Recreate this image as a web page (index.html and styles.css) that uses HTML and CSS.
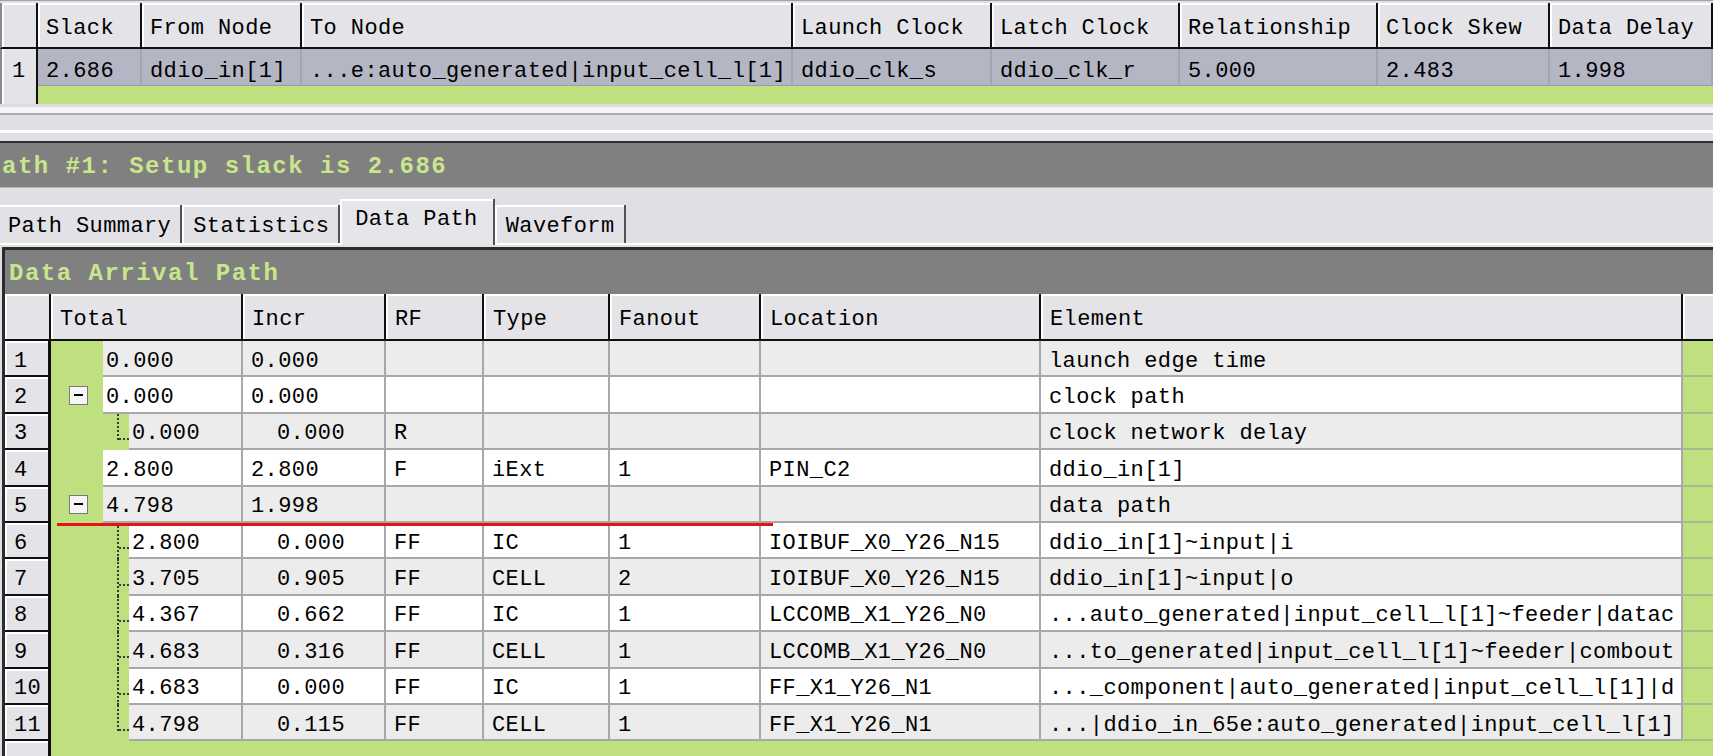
FILE: index.html
```html
<!DOCTYPE html>
<html>
<head>
<meta charset="utf-8">
<link rel="stylesheet" href="styles.css">
</head>
<body>
<div class="top">
  <div class="tgrid">
    <div class="th corner"></div>
    <div class="th">Slack</div>
    <div class="th">From Node</div>
    <div class="th">To Node</div>
    <div class="th">Launch Clock</div>
    <div class="th">Latch Clock</div>
    <div class="th">Relationship</div>
    <div class="th">Clock Skew</div>
    <div class="th">Data Delay</div>
    <div class="rh">1</div>
    <div class="td">2.686</div>
    <div class="td">ddio_in[1]</div>
    <div class="td">...e:auto_generated|input_cell_l[1]</div>
    <div class="td">ddio_clk_s</div>
    <div class="td">ddio_clk_r</div>
    <div class="td">5.000</div>
    <div class="td">2.483</div>
    <div class="td">1.998</div>
    <div class="rh"></div>
    <div class="tfill"></div>
  </div>
</div>
<div class="split"></div>
<div class="band">ath #1: Setup slack is 2.686</div>
<div class="tabs">
  <div class="tab first">Path Summary</div>
  <div class="tab">Statistics</div>
  <div class="tab sel">Data Path</div>
  <div class="tab">Waveform</div>
</div>
<div class="panel">
  <div class="ptitle">Data Arrival Path</div>
  <div class="dgrid">
    <div class="dh"></div>
    <div class="dh">Total</div>
    <div class="dh">Incr</div>
    <div class="dh">RF</div>
    <div class="dh">Type</div>
    <div class="dh">Fanout</div>
    <div class="dh">Location</div>
    <div class="dh">Element</div>
    <div class="dh last"></div>

    <div class="row odd">
      <div class="rn">1</div>
      <div class="tot"><span class="ind"></span><span class="val">0.000</span></div>
      <div class="c">0.000</div><div class="c"></div><div class="c"></div><div class="c"></div><div class="c"></div>
      <div class="c">launch edge time</div><div class="g"></div>
    </div>
    <div class="row even">
      <div class="rn">2</div>
      <div class="tot"><span class="ind"><span class="box"></span></span><span class="val">0.000</span></div>
      <div class="c">0.000</div><div class="c"></div><div class="c"></div><div class="c"></div><div class="c"></div>
      <div class="c">clock path</div><div class="g"></div>
    </div>
    <div class="row odd">
      <div class="rn">3</div>
      <div class="tot"><span class="ind l1 tree end"></span><span class="val">0.000</span></div>
      <div class="c sub">0.000</div><div class="c">R</div><div class="c"></div><div class="c"></div><div class="c"></div>
      <div class="c">clock network delay</div><div class="g"></div>
    </div>
    <div class="row even">
      <div class="rn">4</div>
      <div class="tot"><span class="ind"></span><span class="val">2.800</span></div>
      <div class="c">2.800</div><div class="c">F</div><div class="c">iExt</div><div class="c">1</div><div class="c">PIN_C2</div>
      <div class="c">ddio_in[1]</div><div class="g"></div>
    </div>
    <div class="row odd">
      <div class="rn">5</div>
      <div class="tot"><span class="ind"><span class="box"></span></span><span class="val">4.798</span></div>
      <div class="c">1.998</div><div class="c"></div><div class="c"></div><div class="c"></div><div class="c"></div>
      <div class="c">data path</div><div class="g"></div>
    </div>
    <div class="row even">
      <div class="rn">6</div>
      <div class="tot"><span class="ind l1 tree"></span><span class="val">2.800</span></div>
      <div class="c sub">0.000</div><div class="c">FF</div><div class="c">IC</div><div class="c">1</div><div class="c">IOIBUF_X0_Y26_N15</div>
      <div class="c">ddio_in[1]~input|i</div><div class="g"></div>
    </div>
    <div class="row odd">
      <div class="rn">7</div>
      <div class="tot"><span class="ind l1 tree"></span><span class="val">3.705</span></div>
      <div class="c sub">0.905</div><div class="c">FF</div><div class="c">CELL</div><div class="c">2</div><div class="c">IOIBUF_X0_Y26_N15</div>
      <div class="c">ddio_in[1]~input|o</div><div class="g"></div>
    </div>
    <div class="row even">
      <div class="rn">8</div>
      <div class="tot"><span class="ind l1 tree"></span><span class="val">4.367</span></div>
      <div class="c sub">0.662</div><div class="c">FF</div><div class="c">IC</div><div class="c">1</div><div class="c">LCCOMB_X1_Y26_N0</div>
      <div class="c">...auto_generated|input_cell_l[1]~feeder|datac</div><div class="g"></div>
    </div>
    <div class="row odd">
      <div class="rn">9</div>
      <div class="tot"><span class="ind l1 tree"></span><span class="val">4.683</span></div>
      <div class="c sub">0.316</div><div class="c">FF</div><div class="c">CELL</div><div class="c">1</div><div class="c">LCCOMB_X1_Y26_N0</div>
      <div class="c">...to_generated|input_cell_l[1]~feeder|combout</div><div class="g"></div>
    </div>
    <div class="row even">
      <div class="rn">10</div>
      <div class="tot"><span class="ind l1 tree"></span><span class="val">4.683</span></div>
      <div class="c sub">0.000</div><div class="c">FF</div><div class="c">IC</div><div class="c">1</div><div class="c">FF_X1_Y26_N1</div>
      <div class="c">..._component|auto_generated|input_cell_l[1]|d</div><div class="g"></div>
    </div>
    <div class="row odd">
      <div class="rn">11</div>
      <div class="tot"><span class="ind l1 tree end"></span><span class="val">4.798</span></div>
      <div class="c sub">0.115</div><div class="c">FF</div><div class="c">CELL</div><div class="c">1</div><div class="c">FF_X1_Y26_N1</div>
      <div class="c">...|ddio_in_65e:auto_generated|input_cell_l[1]</div><div class="g"></div>
    </div>
    <div class="rn blank"></div>
    <div class="dfill"></div>
    <div class="redline"></div>
  </div>
</div>
</body>
</html>
```
FILE: styles.css
```css
* { box-sizing: border-box; }
html, body { margin: 0; padding: 0; }
body {
  width: 1713px;
  height: 756px;
  overflow: hidden;
  background: #e0e0e4;
  font-family: "Liberation Mono", "DejaVu Sans Mono", monospace;
  font-size: 22px;
  letter-spacing: 0.4px;
  color: #000;
}

/* ---------- top summary table ---------- */
.top {
  border-top: 1px solid #a0a0a6;
  padding-top: 2px;
}
.tgrid {
  display: grid;
  grid-template-columns: 38px 104px 160px 491px 199px 188px 198px 172px 1fr;
  grid-template-rows: 46px 37px 18px;
}
.th {
  background: #e4e4e8;
  border-right: 2px solid #101010;
  border-bottom: 2px solid #101010;
  box-shadow: inset 2px 2px 0 #fff;
  padding: 7px 0 0 8px;
  display: flex;
  align-items: center;
  white-space: pre;
  overflow: hidden;
}
.th.corner { border-left: 2px solid #8a8a90; }
.rh {
  background: #e4e4e8;
  border-left: 2px solid #8a8a90;
  border-right: 2px solid #101010;
  box-shadow: inset 2px 0 0 #fff;
  padding: 8px 0 0 10px;
  display: flex;
  align-items: center;
}
.td {
  background: #b4b6c4;
  border-right: 2px solid #a3a5b3;
  border-bottom: 1px solid #9a9cab;
  padding: 8px 0 0 8px;
  display: flex;
  align-items: center;
  white-space: pre;
  overflow: hidden;
}
.tfill {
  grid-column: 2 / -1;
  background: #bfe07e;
}

/* ---------- splitter ---------- */
.split {
  height: 39px;
  background: linear-gradient(to bottom,
    #dcdce0 0, #dcdce0 3px,
    #f6f6f8 3px, #f6f6f8 9px,
    #a8a8b0 9px, #a8a8b0 11px,
    #e0e0e4 11px, #e0e0e4 26px,
    #ffffff 26px, #ffffff 29px,
    #e0e0e4 29px, #e0e0e4 37px,
    #303030 37px, #303030 39px);
}

/* ---------- path band ---------- */
.band {
  height: 45px;
  background: #808080;
  color: #c8e68c;
  font-weight: bold;
  font-size: 24px;
  letter-spacing: 1.5px;
  padding: 3px 0 0 2px;
  display: flex;
  align-items: center;
  white-space: pre;
  border-bottom: 1px solid #b8b8bc;
}

/* ---------- tabs ---------- */
.tabs {
  height: 57px;
  display: flex;
  align-items: flex-end;
  background: #e0e0e4;
  box-shadow: inset 0 -2px 0 #fff;
}
.tab {
  height: 38px;
  margin-bottom: 2px;
  padding: 4px 9px 0 11px;
  display: flex;
  align-items: center;
  background: #e2e2e6;
  border-right: 2px solid #505056;
  box-shadow: inset 2px 2px 0 #fff;
  white-space: pre;
}
.tab.first { padding-left: 8px; box-shadow: inset 0 2px 0 #fff; }
.tab.sel {
  height: 46px;
  margin-bottom: 0;
  padding: 0 15px 5px 15px;
  background: #e6e6ea;
}

/* ---------- data arrival panel ---------- */
.panel {
  margin-top: 2px;
  margin-left: 2px;
  border-top: 3px solid #2c2c2c;
  border-left: 3px solid #2c2c2c;
}
.ptitle {
  height: 44px;
  background: #808080;
  color: #c8e68c;
  font-weight: bold;
  font-size: 24px;
  letter-spacing: 1.5px;
  padding: 3px 0 0 4px;
  display: flex;
  align-items: center;
  white-space: pre;
}
.dgrid {
  position: relative;
  display: grid;
  grid-template-columns: 46px 192px 143px 98px 126px 151px 280px 642px 1fr;
  grid-template-rows: 47px repeat(11, 36.4px) 15px;
}
.row { display: contents; }
.dh {
  background: #e4e4e8;
  border-right: 2px solid #101010;
  border-bottom: 2px solid #101010;
  box-shadow: inset 2px 2px 0 #fff;
  padding: 5px 0 0 9px;
  display: flex;
  align-items: center;
  white-space: pre;
}
.dh.last { border-right: none; }
.rn {
  background: #e4e4e8;
  border-right: 3px solid #101010;
  border-bottom: 2px solid #101010;
  box-shadow: inset 2px 2px 0 #fff;
  padding: 6px 0 0 9px;
  display: flex;
  align-items: center;
}
.rn.blank { border-bottom: none; }
.c {
  border-right: 2px solid #a8a8a8;
  border-bottom: 2px solid #a8a8a8;
  padding: 6px 0 0 8px;
  display: flex;
  align-items: center;
  white-space: pre;
  overflow: hidden;
}
.c.sub { padding-left: 34px; }
.odd .c, .odd .val { background: #ececec; }
.even .c, .even .val { background: #ffffff; }
.tot {
  display: flex;
  border-right: 2px solid #a8a8a8;
}
.ind {
  position: relative;
  flex: none;
  width: 52px;
  height: 100%;
  background: #bfe07e;
  display: flex;
  align-items: center;
  padding-left: 18px;
}
.ind.l1 { width: 78px; }
.val {
  flex: 1;
  height: 100%;
  border-bottom: 2px solid #a8a8a8;
  padding: 6px 0 0 3px;
  display: flex;
  align-items: center;
  white-space: pre;
}
.box {
  position: relative;
  width: 19px;
  height: 19px;
  border: 1px solid #7a7a7a;
  background: #f6f6f6;
}
.box::after {
  content: "";
  position: absolute;
  left: 4px;
  right: 4px;
  top: 7px;
  height: 2px;
  background: #000;
}
.tree::before {
  content: "";
  position: absolute;
  left: 66px;
  top: 0;
  bottom: 0;
  border-left: 2px dotted #3a3a3a;
}
.tree.end::before { bottom: calc(50% - 8px); }
.tree::after {
  content: "";
  position: absolute;
  left: 68px;
  width: 10px;
  top: calc(50% + 6px);
  border-top: 2px dotted #3a3a3a;
}
.g {
  background: #bfe07e;
  border-bottom: 2px solid #a8b890;
}
.dfill {
  grid-column: 2 / -1;
  background: #bfe07e;
}
.redline {
  position: absolute;
  left: 52px;
  top: 229px;
  width: 716px;
  height: 3px;
  background: #e8101a;
}
```
